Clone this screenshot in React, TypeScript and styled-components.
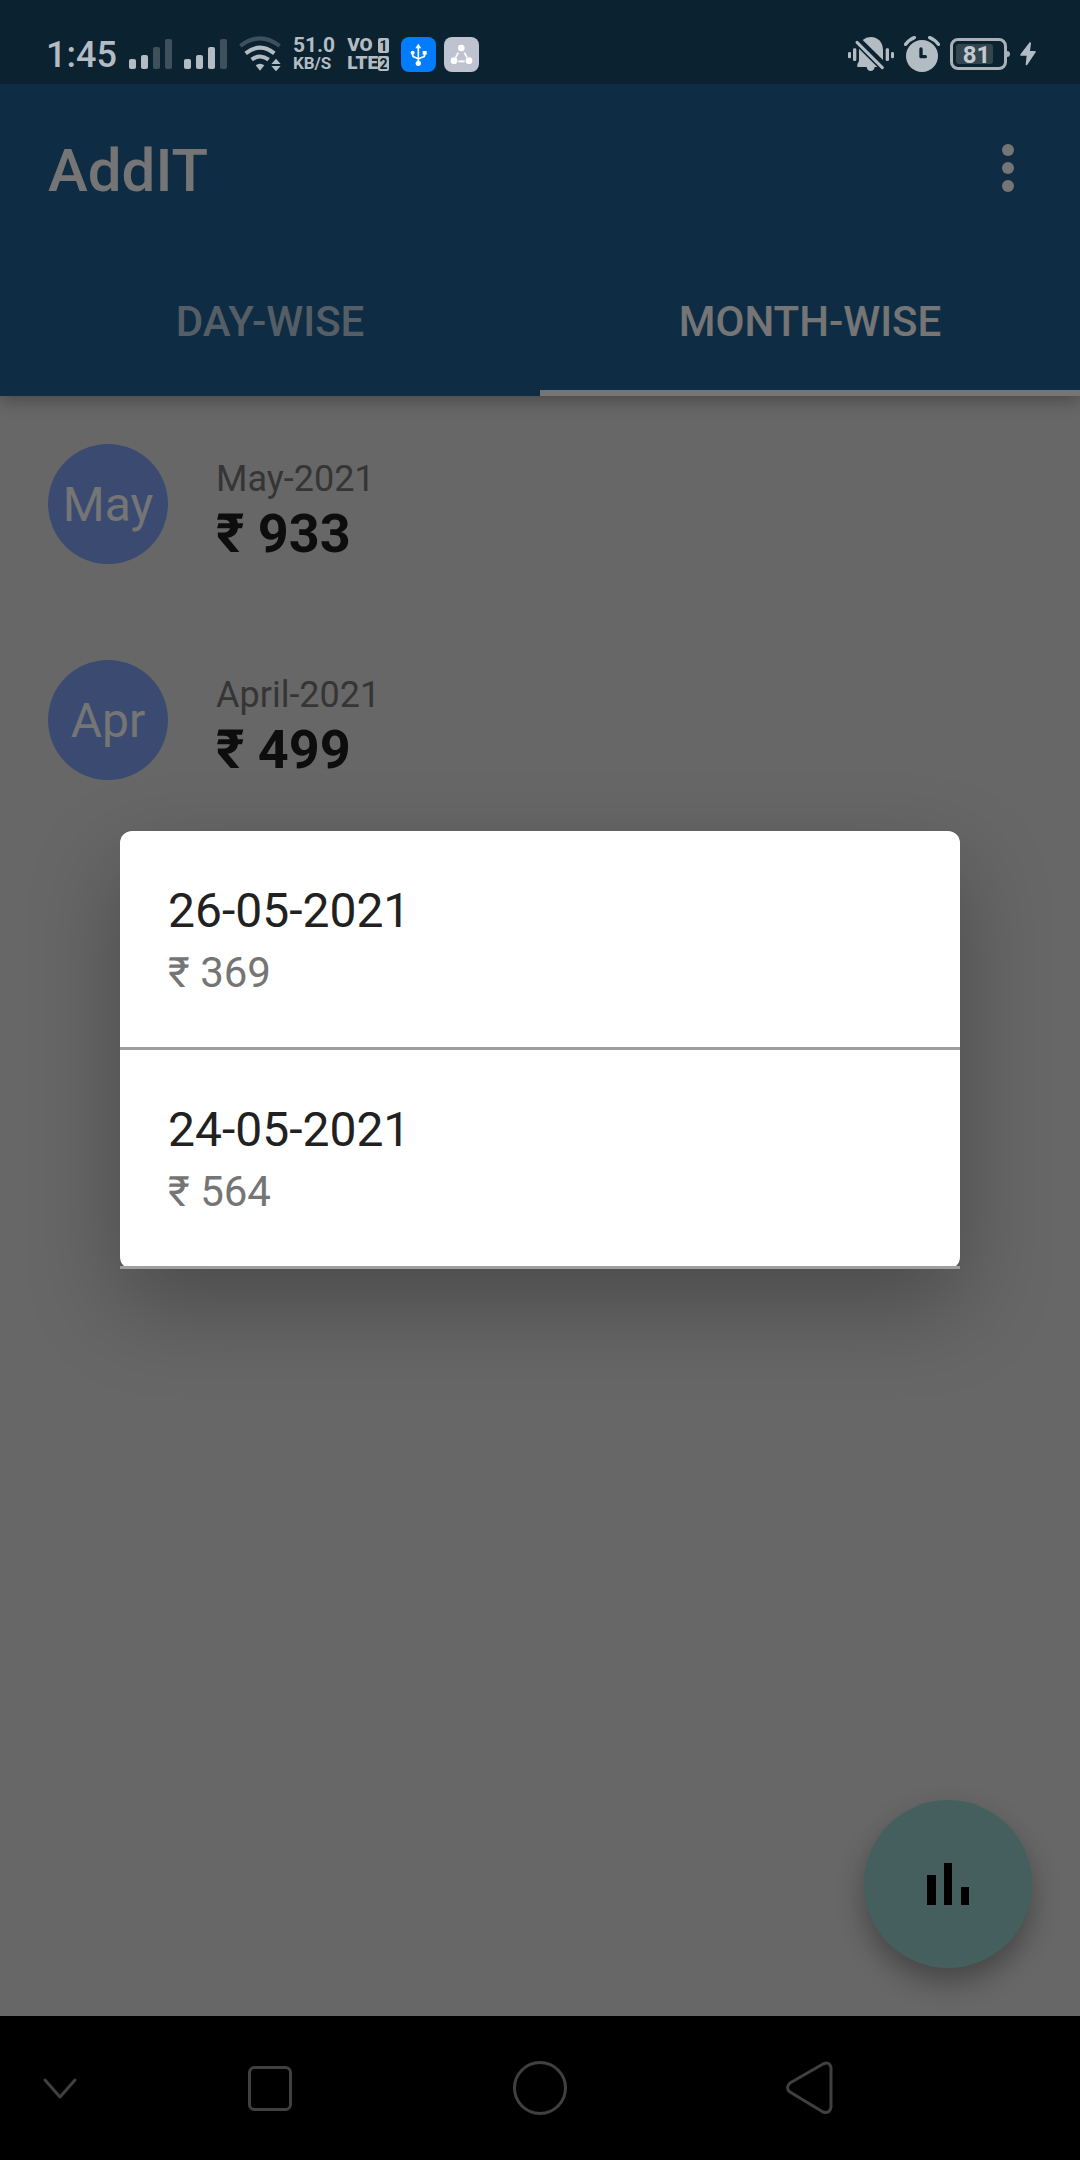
import React from "react";
import styled, { createGlobalStyle } from "styled-components";

const GlobalStyle = createGlobalStyle`
  * { box-sizing: border-box; }
  body { margin: 0; background: #000; font-family: Roboto, "Noto Sans", sans-serif; }
  h1, p, ul { margin: 0; padding: 0; }
  ul { list-style: none; }
  button { font-family: inherit; border: 0; padding: 0; background: none; color: inherit; }
  svg { display: block; flex: none; }
`;

const ink = "#b4bcc3";
const faint = "#3f505d";
const barBg = "#0b2230";

const Screen = styled.div`
  min-height: 100vh;
  display: flex;
  flex-direction: column;
`;

/* ---------- status bar ---------- */

const StatusBar = styled.div`
  position: relative;
  z-index: 1;
  height: 84px;
  flex: none;
  padding: 24px 44px 0 46px;
  display: flex;
  justify-content: space-between;
  align-items: center;
  background: ${barBg};
  color: ${ink};
`;

const StatusGroup = styled.div<{ $gap: number }>`
  display: flex;
  align-items: center;
  gap: ${(p) => p.$gap}px;
`;

const Clock = styled.span`
  padding-top: 2px;
  font-size: 36px;
  line-height: 42px;
  font-weight: 500;
`;

const Stack = styled.div`
  display: grid;
  line-height: 18px;
`;

const Speed = styled.span<{ $size: number }>`
  font-size: ${(p) => p.$size}px;
  font-weight: 700;
`;

const VoLine = styled.span`
  display: flex;
  align-items: center;
  justify-content: space-between;
  font-size: 19px;
  font-weight: 900;
`;

const SimTag = styled.span`
  width: 11px;
  height: 15px;
  border-radius: 2px;
  background: ${ink};
  color: ${barBg};
  font-size: 14px;
  line-height: 16px;
  font-weight: 700;
  text-align: center;
`;

const AppTile = styled.span<{ $color: string }>`
  width: 35px;
  height: 35px;
  border-radius: 8px;
  background: ${(p) => p.$color};
`;

const Battery = styled.span`
  position: relative;
  width: 57px;
  height: 32px;
  margin-right: 3px;
  padding: 3px;
  border: 3px solid #a9b0b6;
  border-radius: 8px;
  display: flex;
  &::after {
    content: "";
    position: absolute;
    left: 54px;
    top: 10px;
    width: 3px;
    height: 6px;
    border-radius: 0 3px 3px 0;
    background: #a9b0b6;
  }
`;

const BatteryLevel = styled.span`
  width: 37px;
  padding-left: 4px;
  border-radius: 3px;
  background: #33454f;
  color: #c3c9ce;
  font-size: 24px;
  line-height: 22px;
  font-weight: 700;
  text-align: center;
`;

function Signal({ level }: { level: number }) {
  return (
    <svg width="43" height="30" viewBox="0 0 43 30" aria-hidden="true">
      {[10, 14, 22, 30].map((h, i) => (
        <rect key={h} x={i * 12} y={30 - h} width="7" height={h} rx="2" fill={i < level ? ink : faint} />
      ))}
    </svg>
  );
}

const Wifi = () => (
  <svg width="42" height="36" viewBox="0 0 126 108" aria-hidden="true">
    <g fill="none" strokeWidth="12">
      <path d="M4 30Q63 -16 122 30" stroke={faint} />
      <path d="M20 52Q63 18 106 52" stroke={ink} />
      <path d="M38 71Q63 52 89 71" stroke={ink} />
    </g>
    <path d="M50 88Q63 79 76 88L63 104Z" fill={ink} />
    <path d="M97 84L111 68L125 84ZM97 90H125L111 106Z" fill={ink} />
  </svg>
);

const UsbGlyph = () => (
  <svg width="35" height="35" viewBox="0 0 105 105" aria-hidden="true">
    <g fill="none" stroke="#fff" strokeWidth="5">
      <path d="M52 28V80M35 48V54Q35 60 42 61L52 66M71 48V54Q71 60 63 61L52 66" />
    </g>
    <path d="M52 20L61 34H43Z" fill="#fff" />
    <circle cx="35" cy="47" r="6" fill="#fff" />
    <rect x="65" y="42" width="12" height="11" fill="#fff" />
    <circle cx="52" cy="79" r="8" fill="#fff" />
  </svg>
);

const ShareGlyph = () => (
  <svg width="35" height="35" viewBox="0 0 105 105" aria-hidden="true">
    <path d="M43 47L35 61M61 47L69 61M43 73H62" stroke="#fff" strokeWidth="5" />
    <circle cx="52" cy="33" r="10" fill="#fff" />
    <circle cx="30" cy="71" r="10" fill="#fff" />
    <circle cx="75" cy="71" r="10" fill="#fff" />
  </svg>
);

const MutedBell = () => (
  <svg width="46" height="36" viewBox="0 0 138 108" aria-hidden="true">
    <g fill={ink}>
      <rect x="0" y="48" width="9" height="19" rx="4" />
      <rect x="15" y="37" width="10" height="38" rx="4" />
      <rect x="113" y="37" width="10" height="38" rx="4" />
      <rect x="129" y="48" width="9" height="19" rx="4" />
      <path d="M44 12Q54 3 68 3Q103 5 105 42V72Z" />
      <path d="M33 38L88 93H80Q78 105 68 105Q58 105 56 93H28V84Q33 80 33 72Z" />
    </g>
    <path d="M27 19L103 95" stroke={ink} strokeWidth="9" strokeLinecap="round" />
  </svg>
);

const Alarm = () => (
  <svg width="36" height="36" viewBox="0 0 108 108" aria-hidden="true">
    <circle cx="54" cy="60" r="48" fill={ink} />
    <g fill="none" stroke={ink} strokeWidth="10" strokeLinecap="round">
      <path d="M5 25Q15 11 31 5M77 5Q93 11 103 25" />
    </g>
    <path d="M51 39V62H64" fill="none" stroke={barBg} strokeWidth="10" strokeLinecap="round" strokeLinejoin="round" />
  </svg>
);

const Bolt = () => (
  <svg width="16" height="24" viewBox="0 0 48 72" aria-hidden="true">
    <path d="M29 1Q33 0 33 4L30 27H45Q49 28 46 32L22 68Q17 72 17 67L20 41H3Q-1 40 2 36Z" fill={ink} />
  </svg>
);

/* ---------- app window ---------- */

const AppWindow = styled.main`
  position: relative;
  flex: 1;
  display: flex;
  flex-direction: column;
  background: #e0e0e0;
`;

const Header = styled.header`
  background: #1f6092;
  color: #fff;
  box-shadow: 0 4px 16px rgba(0, 0, 0, 0.3);
`;

const Toolbar = styled.div`
  height: 168px;
  padding: 0 36px 0 48px;
  display: flex;
  align-items: center;
  justify-content: space-between;
`;

const Title = styled.h1`
  padding-top: 6px;
  font-size: 60px;
  line-height: 70px;
  font-weight: 500;
`;

const MenuButton = styled.button`
  width: 72px;
  height: 72px;
  display: grid;
  place-items: center;
`;

const Tabs = styled.div`
  height: 144px;
  display: grid;
  grid-template-columns: 1fr 1fr;
`;

const Tab = styled.button<{ $active?: boolean }>`
  padding-top: 2px;
  border-bottom: 6px solid ${(p) => (p.$active ? "#fff" : "transparent")};
  color: ${(p) => (p.$active ? "#fff" : "rgba(255, 255, 255, 0.7)")};
  font-size: 42px;
  line-height: 50px;
  font-weight: 500;
`;

const MonthRow = styled.li`
  padding: 48px;
  display: flex;
  gap: 48px;
`;

const Avatar = styled.span`
  width: 120px;
  height: 120px;
  border-radius: 50%;
  display: grid;
  place-items: center;
  background: #82a1f6;
  color: #fff;
  font-size: 48px;
`;

const MonthText = styled.div`
  padding-top: 10px;
`;

const MonthName = styled.p`
  color: #757575;
  font-size: 36px;
  line-height: 50px;
`;

const MonthTotal = styled.p`
  color: #1d1d1d;
  font-size: 54px;
  line-height: 60px;
  font-weight: 700;
`;

const Fab = styled.button`
  position: absolute;
  right: 48px;
  bottom: 48px;
  width: 168px;
  height: 168px;
  border-radius: 50%;
  display: grid;
  place-items: center;
  background: #96cfcf;
  box-shadow: 0 14px 28px rgba(0, 0, 0, 0.32);
`;

/* ---------- dialog ---------- */

const Scrim = styled.div`
  position: absolute;
  inset: 0;
  padding: 0 120px;
  display: flex;
  align-items: center;
  background: rgba(0, 0, 0, 0.54);
`;

const Dialog = styled.div`
  flex: 1;
  background: #fff;
  border-radius: 12px;
  box-shadow: 0 36px 90px rgba(0, 0, 0, 0.28);
`;

const DayRow = styled.li`
  padding: 47px 48px 45px;
  border-bottom: 3px solid #9e9e9e;
`;

const DayDate = styled.p`
  color: #212121;
  font-size: 48px;
  line-height: 66px;
`;

const DayTotal = styled.p`
  color: #757575;
  font-size: 42px;
  line-height: 58px;
`;

/* ---------- navigation bar ---------- */

const NavBar = styled.nav`
  height: 144px;
  flex: none;
  display: grid;
  grid-template-columns: 1fr 2fr 2fr 2fr 1fr;
  background: #000;
`;

const NavButton = styled.button<{ $start?: boolean }>`
  display: flex;
  align-items: center;
  justify-content: ${(p) => (p.$start ? "flex-start" : "center")};
  padding-left: ${(p) => (p.$start ? 32 : 0)}px;
`;

const navIcons: { label: string; shape: React.ReactNode }[] = [
  { label: "Hide navigation bar", shape: <path d="M13 20L28 37L43 20" /> },
  { label: "Recent apps", shape: <rect x="7.5" y="7.5" width="41" height="42" rx="5" /> },
  { label: "Home", shape: <circle cx="28" cy="28" r="25.5" /> },
  { label: "Back", shape: <path d="M8 23L41 4Q48 1 49 8V47Q48 54 41 52L8 32Q3 28 8 23Z" /> },
];

const months = [
  { short: "May", name: "May-2021", total: 933 },
  { short: "Apr", name: "April-2021", total: 499 },
];

const days = [
  { date: "26-05-2021", total: 369 },
  { date: "24-05-2021", total: 564 },
];

export default function App() {
  return (
    <Screen>
      <GlobalStyle />
      <StatusBar>
        <StatusGroup $gap={12}>
          <Clock>1:45</Clock>
          <Signal level={2} />
          <Signal level={3} />
          <Wifi />
          <Stack>
            <Speed $size={21}>51.0</Speed>
            <Speed $size={17}>KB/S</Speed>
          </Stack>
          <Stack>
            <VoLine>VO<SimTag>1</SimTag></VoLine>
            <VoLine>LTE<SimTag>2</SimTag></VoLine>
          </Stack>
          <StatusGroup $gap={8}>
            <AppTile $color="#007dff"><UsbGlyph /></AppTile>
            <AppTile $color="#bfc2cf"><ShareGlyph /></AppTile>
          </StatusGroup>
        </StatusGroup>
        <StatusGroup $gap={10}>
          <MutedBell />
          <Alarm />
          <Battery><BatteryLevel>81</BatteryLevel></Battery>
          <Bolt />
        </StatusGroup>
      </StatusBar>

      <AppWindow>
        <Header>
          <Toolbar>
            <Title>AddIT</Title>
            <MenuButton aria-label="More options">
              <svg width="12" height="48" viewBox="0 0 12 48" fill="#fff" aria-hidden="true">
                <circle cx="6" cy="6" r="6" />
                <circle cx="6" cy="24" r="6" />
                <circle cx="6" cy="42" r="6" />
              </svg>
            </MenuButton>
          </Toolbar>
          <Tabs role="tablist">
            <Tab role="tab" aria-selected={false}>DAY-WISE</Tab>
            <Tab role="tab" aria-selected $active>MONTH-WISE</Tab>
          </Tabs>
        </Header>

        <ul>
          {months.map((m) => (
            <MonthRow key={m.name}>
              <Avatar>{m.short}</Avatar>
              <MonthText>
                <MonthName>{m.name}</MonthName>
                <MonthTotal>₹ {m.total}</MonthTotal>
              </MonthText>
            </MonthRow>
          ))}
        </ul>

        <Fab aria-label="Show chart">
          <svg width="42" height="42" viewBox="0 0 42 42" aria-hidden="true">
            <path d="M0 12H9V42H0ZM17 0H25V42H17ZM34 24H42V42H34Z" />
          </svg>
        </Fab>

        <Scrim>
          <Dialog role="dialog" aria-modal="true" aria-label="Daily totals">
            <ul>
              {days.map((d) => (
                <DayRow key={d.date}>
                  <DayDate>{d.date}</DayDate>
                  <DayTotal>₹ {d.total}</DayTotal>
                </DayRow>
              ))}
            </ul>
          </Dialog>
        </Scrim>
      </AppWindow>

      <NavBar>
        {navIcons.map((icon, i) => (
          <NavButton key={icon.label} aria-label={icon.label} $start={i === 0}>
            <svg
              width="56"
              height="56"
              viewBox="0 0 56 56"
              fill="none"
              stroke="#404040"
              strokeWidth="3"
              strokeLinecap="round"
              strokeLinejoin="round"
              aria-hidden="true"
            >
              {icon.shape}
            </svg>
          </NavButton>
        ))}
      </NavBar>
    </Screen>
  );
}
